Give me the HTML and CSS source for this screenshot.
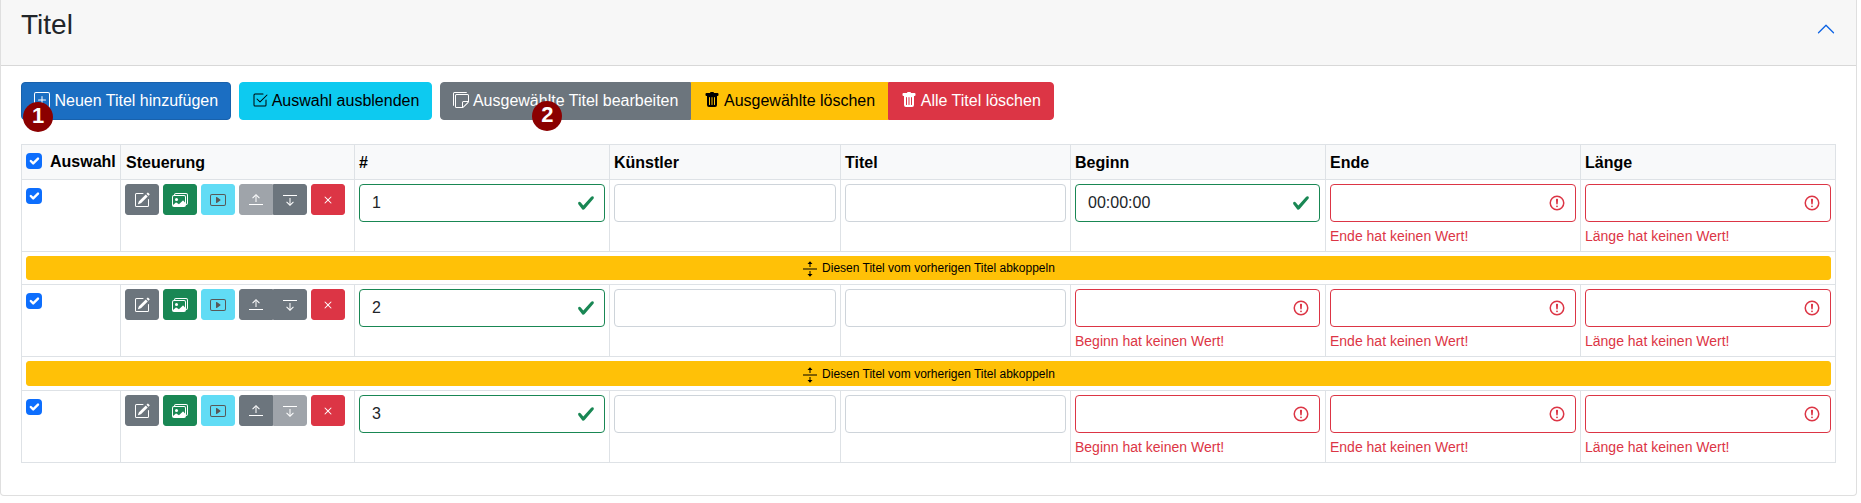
FILE: index.html
```html
<!DOCTYPE html>
<html lang="de">
<head>
<meta charset="utf-8">
<title>Titel</title>
<link rel="stylesheet" href="styles.css">
</head>
<body>
<svg class="sprite" aria-hidden="true">
  <symbol id="plus" viewBox="0 0 16 16"><path d="M14 1a1 1 0 0 1 1 1v12a1 1 0 0 1-1 1H2a1 1 0 0 1-1-1V2a1 1 0 0 1 1-1h12zM2 0a2 2 0 0 0-2 2v12a2 2 0 0 0 2 2h12a2 2 0 0 0 2-2V2a2 2 0 0 0-2-2H2z"/><path d="M8 4a.5.5 0 0 1 .5.5v3h3a.5.5 0 0 1 0 1h-3v3a.5.5 0 0 1-1 0v-3h-3a.5.5 0 0 1 0-1h3v-3A.5.5 0 0 1 8 4z"/></symbol>
  <symbol id="check-square" viewBox="0 0 16 16"><path d="M3 14.5A1.5 1.5 0 0 1 1.5 13V3A1.5 1.5 0 0 1 3 1.5h8a.5.5 0 0 1 0 1H3a.5.5 0 0 0-.5.5v10a.5.5 0 0 0 .5.5h10a.5.5 0 0 0 .5-.5V8a.5.5 0 0 1 1 0v5a1.5 1.5 0 0 1-1.5 1.5H3z"/><path d="m8.354 10.354 7-7a.5.5 0 0 0-.708-.708L8 9.293 5.354 6.646a.5.5 0 1 0-.708.708l3 3a.5.5 0 0 0 .708 0z"/></symbol>
  <symbol id="stickies" viewBox="0 0 16 16"><path d="M1.5 0A1.5 1.5 0 0 0 0 1.5V13a1 1 0 0 0 1 1V1.5a.5.5 0 0 1 .5-.5H14a1 1 0 0 0-1-1H1.5z"/><path d="M3.5 2A1.5 1.5 0 0 0 2 3.5v11A1.5 1.5 0 0 0 3.5 16h6.086a1.5 1.5 0 0 0 1.06-.44l4.915-4.914A1.5 1.5 0 0 0 16 9.586V3.5A1.5 1.5 0 0 0 14.5 2h-11zM3 3.5a.5.5 0 0 1 .5-.5h11a.5.5 0 0 1 .5.5V9h-4.5A1.5 1.5 0 0 0 9 10.5V15H3.5a.5.5 0 0 1-.5-.5v-11zm7 11.293V10.5a.5.5 0 0 1 .5-.5h4.293L10 14.793z"/></symbol>
  <symbol id="trash" viewBox="0 0 16 16"><path d="M2.5 1a1 1 0 0 0-1 1v1a1 1 0 0 0 1 1H3v9a2 2 0 0 0 2 2h6a2 2 0 0 0 2-2V4h.5a1 1 0 0 0 1-1V2a1 1 0 0 0-1-1H10a1 1 0 0 0-1-1H7a1 1 0 0 0-1 1H2.5zm3 4a.5.5 0 0 1 .5.5v7a.5.5 0 0 1-1 0v-7a.5.5 0 0 1 .5-.5zM8 5a.5.5 0 0 1 .5.5v7a.5.5 0 0 1-1 0v-7A.5.5 0 0 1 8 5zm3 .5v7a.5.5 0 0 1-1 0v-7a.5.5 0 0 1 1 0z"/></symbol>
  <symbol id="pencil" viewBox="0 0 16 16"><path d="M15.502 1.94a.5.5 0 0 1 0 .706L14.459 3.69l-2-2L13.502.646a.5.5 0 0 1 .707 0l1.293 1.293zm-1.75 2.456-2-2L4.939 9.21a.5.5 0 0 0-.121.196l-.805 2.414a.25.25 0 0 0 .316.316l2.414-.805a.5.5 0 0 0 .196-.12l6.813-6.814z"/><path fill-rule="evenodd" d="M1 13.5A1.5 1.5 0 0 0 2.500 15h11a1.500 1.500 0 0 0 1.500-1.500v-6a.5.5 0 0 0-1 0v6a.5.5 0 0 1-.5.5h-11a.5.5 0 0 1-.5-.5v-11a.5.5 0 0 1 .5-.5H9a.5.5 0 0 0 0-1H2.500A1.500 1.500 0 0 0 1 2.500v11z"/></symbol>
  <symbol id="images" viewBox="0 0 16 16"><path d="M4.502 9a1.500 1.500 0 1 0 0-3 1.500 1.500 0 0 0 0 3z"/><path d="M14.002 13a2 2 0 0 1-2 2h-10a2 2 0 0 1-2-2V5A2 2 0 0 1 2 3a2 2 0 0 1 2-2h10a2 2 0 0 1 2 2v8a2 2 0 0 1-1.998 2zM14 2H4a1 1 0 0 0-1 1h9.002a2 2 0 0 1 2 2v7A1 1 0 0 0 15 11V3a1 1 0 0 0-1-1zM2.002 4a1 1 0 0 0-1 1v8l2.646-2.354a.5.5 0 0 1 .63-.062l2.660 1.773 3.710-3.710a.5.5 0 0 1 .577-.094l1.777 1.947V5a1 1 0 0 0-1-1h-10z"/></symbol>
  <symbol id="play" viewBox="0 0 16 16"><path d="M6.79 5.093A.5.5 0 0 0 6 5.500v5a.5.5 0 0 0 .79.407l3.500-2.500a.5.5 0 0 0 0-.814l-3.500-2.500z"/><path d="M0 4a2 2 0 0 1 2-2h12a2 2 0 0 1 2 2v8a2 2 0 0 1-2 2H2a2 2 0 0 1-2-2V4zm15 0a1 1 0 0 0-1-1H2a1 1 0 0 0-1 1v8a1 1 0 0 0 1 1h12a1 1 0 0 0 1-1V4z"/></symbol>
  <symbol id="up" viewBox="0 0 16 16"><path d="M1 12h14v1H1zM7.500 4h1v6h-1z"/><path d="M8 2 11.800 5.700l-.7.700L8 3.500 4.900 6.400l-.7-.7z"/></symbol>
  <symbol id="down" viewBox="0 0 16 16"><path d="M1 3h14v1H1zM7.500 6h1v7h-1z"/><path d="M8 14 4.200 10.300l.7-.7L8 12.500l3.100-2.900.7.700z"/></symbol>
  <symbol id="x" viewBox="0 0 16 16"><path d="M4.646 4.646a.5.5 0 0 1 .708 0L8 7.293l2.646-2.647a.5.5 0 0 1 .708.708L8.707 8l2.647 2.646a.5.5 0 0 1-.708.708L8 8.707l-2.646 2.647a.5.5 0 0 1-.708-.708L7.293 8 4.646 5.354a.5.5 0 0 1 0-.708z"/></symbol>
  <symbol id="split" viewBox="0 0 16 16"><path d="M1 7.500h14v1H1zM7.500 1.500h1V6h-1zM7.500 10h1v4.500h-1z"/><path d="M8 .2 10.500 3h-5zM8 15.800 5.500 13h5z"/></symbol>
  <symbol id="chevron" viewBox="0 0 16 16"><path d="M7.646 4.646a.5.5 0 0 1 .708 0l6 6a.5.5 0 0 1-.708.708L8 5.707l-5.646 5.647a.5.5 0 0 1-.708-.708l6-6z"/></symbol>
  <symbol id="valid" viewBox="0 0 8 8"><path d="M2.300 6.730.6 4.530c-.4-1.040.46-1.400 1.100-.8l1.100 1.400 3.400-3.800c.6-.63 1.600-.27 1.200.7l-4 4.600c-.43.5-.8.4-1.100.1z"/></symbol>
  <symbol id="invalid" viewBox="0 0 12 12"><circle cx="6" cy="6" r="4.500" fill="none" stroke="currentColor"/><path d="M5.800 3.600h.4L6 6.500z" stroke="currentColor" stroke-linejoin="round"/><circle cx="6" cy="8.200" r=".6"/></symbol>
  <symbol id="tick" viewBox="0 0 20 20"><path fill="none" stroke="currentColor" stroke-linecap="round" stroke-linejoin="round" stroke-width="3" d="m6 10 3 3 6-6"/></symbol>
</svg>

<section class="card">
  <header class="card-header">
    <h3>Titel</h3>
    <svg class="icon collapse"><use href="#chevron"/></svg>
  </header>
  <div class="card-body">
    <div class="toolbar">
      <button class="btn primary"><svg class="icon"><use href="#plus"/></svg> Neuen Titel hinzufügen<span class="marker first">1</span></button>
      <button class="btn info"><svg class="icon"><use href="#check-square"/></svg> Auswahl ausblenden</button>
      <div class="group">
        <button class="btn secondary"><svg class="icon"><use href="#stickies"/></svg> Ausgewählte Titel bearbeiten<span class="marker second">2</span></button>
        <button class="btn warning"><svg class="icon"><use href="#trash"/></svg> Ausgewählte löschen</button>
        <button class="btn danger"><svg class="icon"><use href="#trash"/></svg> Alle Titel löschen</button>
      </div>
    </div>

    <table class="tracks">
      <colgroup><col class="c-select"><col class="c-control"><col class="c-wide"><col class="c-artist"><col class="c-title"><col class="c-wide"><col class="c-wide"><col class="c-wide"></colgroup>
      <thead>
        <tr><th><div class="select-all"><span class="check"><svg><use href="#tick"/></svg></span><span>Auswahl</span></div></th><th class="h-control">Steuerung</th><th>#</th><th>Künstler</th><th>Titel</th><th>Beginn</th><th>Ende</th><th>Länge</th></tr>
      </thead>
      <tbody>
        <tr class="track">
          <td><span class="check"><svg><use href="#tick"/></svg></span></td>
          <td><div class="controls">
            <button class="mini secondary"><svg class="icon"><use href="#pencil"/></svg></button>
            <button class="mini success"><svg class="icon"><use href="#images"/></svg></button>
            <button class="mini info disabled"><svg class="icon"><use href="#play"/></svg></button>
            <div class="group"><button class="mini secondary disabled"><svg class="icon"><use href="#up"/></svg></button><button class="mini secondary"><svg class="icon"><use href="#down"/></svg></button></div>
            <button class="mini danger"><svg class="icon"><use href="#x"/></svg></button>
          </div></td>
          <td><div class="field valid"><span>1</span><svg><use href="#valid"/></svg></div></td>
          <td><div class="field"></div></td>
          <td><div class="field"></div></td>
          <td class="begin"><div class="field valid"><span>00:00:00</span><svg><use href="#valid"/></svg></div></td>
          <td><div class="field invalid"><svg><use href="#invalid"/></svg></div><div class="feedback">Ende hat keinen Wert!</div></td>
          <td><div class="field invalid"><svg><use href="#invalid"/></svg></div><div class="feedback">Länge hat keinen Wert!</div></td>
        </tr>
        <tr class="link">
          <td colspan="8"><button class="unlink warning"><svg class="icon"><use href="#split"/></svg> Diesen Titel vom vorherigen Titel abkoppeln</button></td>
        </tr>
        <tr class="track">
          <td><span class="check"><svg><use href="#tick"/></svg></span></td>
          <td><div class="controls">
            <button class="mini secondary"><svg class="icon"><use href="#pencil"/></svg></button>
            <button class="mini success"><svg class="icon"><use href="#images"/></svg></button>
            <button class="mini info disabled"><svg class="icon"><use href="#play"/></svg></button>
            <div class="group"><button class="mini secondary"><svg class="icon"><use href="#up"/></svg></button><button class="mini secondary"><svg class="icon"><use href="#down"/></svg></button></div>
            <button class="mini danger"><svg class="icon"><use href="#x"/></svg></button>
          </div></td>
          <td><div class="field valid"><span>2</span><svg><use href="#valid"/></svg></div></td>
          <td><div class="field"></div></td>
          <td><div class="field"></div></td>
          <td class="begin"><div class="field invalid"><svg><use href="#invalid"/></svg></div><div class="feedback">Beginn hat keinen Wert!</div></td>
          <td><div class="field invalid"><svg><use href="#invalid"/></svg></div><div class="feedback">Ende hat keinen Wert!</div></td>
          <td><div class="field invalid"><svg><use href="#invalid"/></svg></div><div class="feedback">Länge hat keinen Wert!</div></td>
        </tr>
        <tr class="link tall">
          <td colspan="8"><button class="unlink warning"><svg class="icon"><use href="#split"/></svg> Diesen Titel vom vorherigen Titel abkoppeln</button></td>
        </tr>
        <tr class="track">
          <td><span class="check"><svg><use href="#tick"/></svg></span></td>
          <td><div class="controls">
            <button class="mini secondary"><svg class="icon"><use href="#pencil"/></svg></button>
            <button class="mini success"><svg class="icon"><use href="#images"/></svg></button>
            <button class="mini info disabled"><svg class="icon"><use href="#play"/></svg></button>
            <div class="group"><button class="mini secondary"><svg class="icon"><use href="#up"/></svg></button><button class="mini secondary disabled"><svg class="icon"><use href="#down"/></svg></button></div>
            <button class="mini danger"><svg class="icon"><use href="#x"/></svg></button>
          </div></td>
          <td><div class="field valid"><span>3</span><svg><use href="#valid"/></svg></div></td>
          <td><div class="field"></div></td>
          <td><div class="field"></div></td>
          <td class="begin"><div class="field invalid"><svg><use href="#invalid"/></svg></div><div class="feedback">Beginn hat keinen Wert!</div></td>
          <td><div class="field invalid"><svg><use href="#invalid"/></svg></div><div class="feedback">Ende hat keinen Wert!</div></td>
          <td><div class="field invalid"><svg><use href="#invalid"/></svg></div><div class="feedback">Länge hat keinen Wert!</div></td>
        </tr>
      </tbody>
    </table>
  </div>
</section>
</body>
</html>
```

FILE: styles.css
```css
* { box-sizing: border-box; }

body {
  margin: 0;
  background: #fff;
  color: #212529;
  font: 16px/24px "Liberation Sans", Arial, sans-serif;
}

.sprite { display: none; }

.icon {
  width: 16px;
  height: 16px;
  fill: currentColor;
}

.card {
  width: 1857px;
  height: 496px;
  border: 1px solid #dfdfdf;
  border-top: 0;
  border-radius: 0 0 4px 4px;
}

.card-header {
  display: flex;
  justify-content: space-between;
  height: 66px;
  padding: 8px 20px 0;
  background: #f7f7f7;
  border-bottom: 1px solid #d8d8d8;
}

h3 {
  margin: 0;
  font-size: 28px;
  font-weight: 400;
  line-height: 34px;
}

.collapse {
  width: 20px;
  height: 20px;
  margin-top: 11px;
  color: #0c63e4;
}

.card-body { padding: 16px 20px; }

.toolbar {
  display: flex;
  gap: 8px;
  margin-bottom: 24px;
}

button {
  margin: 0;
  font-family: inherit;
  color: #fff;
  border: 1px solid transparent;
}

.btn {
  position: relative;
  height: 38px;
  padding: 6px 12px;
  border-radius: 4px;
  font-size: 16px;
  line-height: 24px;
  white-space: nowrap;
}

.btn .icon { vertical-align: -2px; }

.primary { background: #1b6ec2; border-color: #1861ac; }
.info { background: #0dcaf0; border-color: #0dcaf0; color: #000; }
.secondary { background: #6c757d; border-color: #6c757d; }
.warning { background: #ffc107; border-color: #ffc107; color: #000; }
.danger { background: #dc3545; border-color: #dc3545; }
.success { background: #198754; border-color: #198754; }
.disabled { opacity: .65; }

.group { display: flex; }
.group button:not(:first-child) { border-top-left-radius: 0; border-bottom-left-radius: 0; }
.group button:not(:last-child) { border-top-right-radius: 0; border-bottom-right-radius: 0; }

.marker {
  position: absolute;
  z-index: 1;
  top: 18px;
  width: 30px;
  height: 30px;
  border-radius: 50%;
  background: #8b0000;
  color: #fff;
  font-size: 22px;
  font-weight: 700;
  line-height: 28px;
  text-align: center;
}

.first { top: 19px; left: 1px; }
.second { left: 91px; }

.tracks {
  width: 1815px;
  table-layout: fixed;
  border-spacing: 1px;
  background: #dee2e6;
}

.c-select { width: 98px; }
.c-control { width: 233px; }
.c-wide { width: 254px; }
.c-artist { width: 230px; }
.c-title { width: 229px; }

th {
  height: 34px;
  padding: 6px 4px 4px;
  background: #f8f9fa;
  color: #000;
  font-weight: 700;
  line-height: 24px;
  text-align: left;
  vertical-align: top;
}

.h-control { padding-left: 5px; }

td {
  padding: 4px;
  background: #fff;
  vertical-align: top;
}

.track td { height: 71px; }
.link td { height: 32px; }
.link.tall td { height: 33px; }
.track .begin { padding-right: 5px; }

.select-all {
  display: flex;
  align-items: flex-start;
  gap: 8px;
  margin-top: -1px;
}

.select-all .check { margin-top: 3px; }

.check {
  display: block;
  width: 16px;
  height: 16px;
  border-radius: 4px;
  background: #0d6efd;
  color: #fff;
}

.check svg { display: block; width: 16px; height: 16px; }
td .check { margin-top: 4px; }

.controls { display: flex; gap: 4px; }

.mini {
  display: flex;
  align-items: center;
  justify-content: center;
  width: 34px;
  height: 31px;
  padding: 1px 0 0;
  border-radius: 3px;
}

.field {
  display: flex;
  align-items: center;
  height: 38px;
  padding: 0 9px 0 12px;
  border: 1px solid #ced4da;
  border-radius: 4px;
}

.field svg {
  width: 18px;
  height: 18px;
  margin-left: auto;
}

.field.valid { border-color: #198754; }
.field.valid svg { fill: #198754; }
.field.invalid { border-color: #dc3545; }
.field.invalid svg { fill: #dc3545; color: #dc3545; }

.feedback {
  margin-top: 4px;
  color: #dc3545;
  font-size: 14px;
  line-height: 21px;
}

.unlink {
  display: flex;
  align-items: center;
  justify-content: center;
  gap: 4px;
  width: 100%;
  height: 24px;
  padding: 0;
  border-radius: 3px;
  font-size: 12px;
  line-height: 18px;
}

.link.tall .unlink { height: 25px; }
.unlink .icon { margin-top: 2px; }
```
